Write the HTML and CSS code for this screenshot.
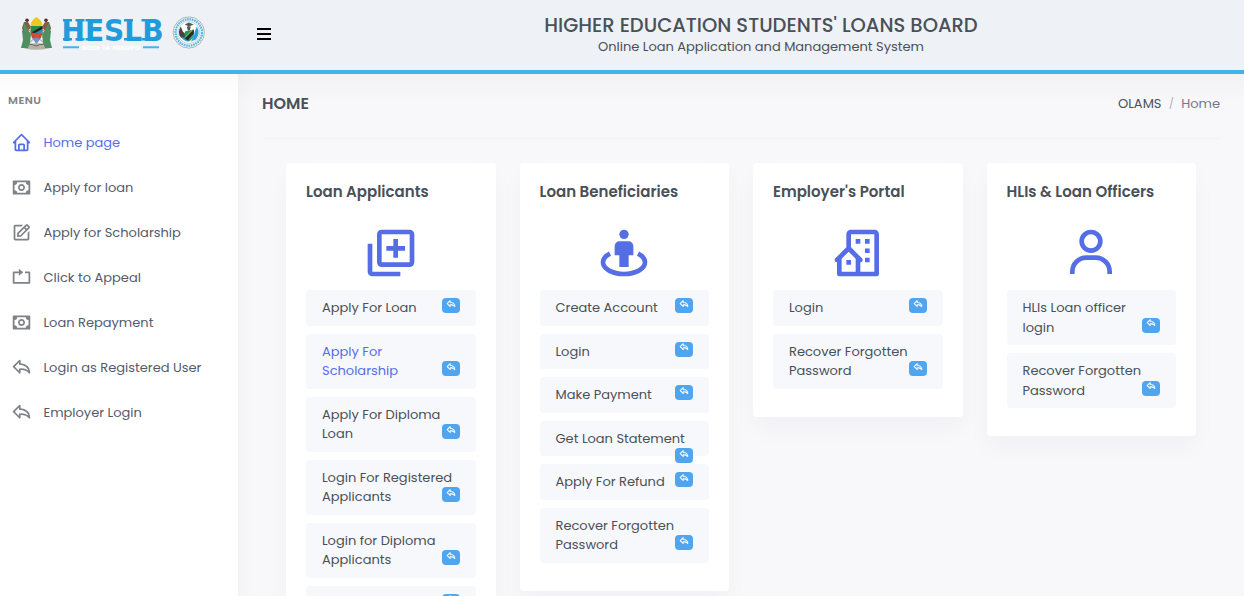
FILE: index.html
```html
<!DOCTYPE html>
<html lang="en">
<head>
<meta charset="utf-8">
<title>HESLB - OLAMS</title>
<link rel="stylesheet" href="styles.css">
</head>
<body>
<svg class="defs" width="0" height="0">
  <symbol id="home" viewBox="0 0 24 24"><path d="M3 13h1v7c0 1.103.897 2 2 2h12c1.103 0 2-.897 2-2v-7h1a1 1 0 0 0 .707-1.707l-9-9a.999.999 0 0 0-1.414 0l-9 9A1 1 0 0 0 3 13zm7 7v-5h4v5h-4zm2-15.586 6 6V15l.001 5H16v-5c0-1.103-.897-2-2-2h-4c-1.103 0-2 .897-2 2v5H6v-9.586l6-6z"/></symbol>
  <symbol id="money" viewBox="0 0 24 24"><path d="M12 8c-2.206 0-4 1.794-4 4s1.794 4 4 4 4-1.794 4-4-1.794-4-4-4zm0 6c-1.103 0-2-.897-2-2s.897-2 2-2 2 .897 2 2-.897 2-2 2z"/><path d="M21 4H3a1 1 0 0 0-1 1v14a1 1 0 0 0 1 1h18a1 1 0 0 0 1-1V5a1 1 0 0 0-1-1zm-1 11a3 3 0 0 0-3 3H7a3 3 0 0 0-3-3V9a3 3 0 0 0 3-3h10a3 3 0 0 0 3 3v6z"/></symbol>
  <symbol id="edit" viewBox="0 0 24 24"><path d="m7 17.013 4.413-.015 9.632-9.54c.378-.378.586-.88.586-1.414s-.208-1.036-.586-1.414l-1.586-1.586c-.756-.756-2.075-.752-2.825-.003L7 12.583v4.43zM18.045 4.458l1.589 1.583-1.597 1.582-1.586-1.585 1.594-1.58zM9 13.417l6.03-5.973 1.586 1.586-6.029 5.971L9 15.006v-1.589z"/><path d="M5 21h14c1.103 0 2-.897 2-2v-8.668l-2 2V19H5V5h6.847l2-2H5c-1.103 0-2 .897-2 2v14c0 1.103.897 2 2 2z"/></symbol>
  <symbol id="appeal" viewBox="0 0 24 24"><path d="M2 6a1 1 0 0 1 1-1h6V2l5 4-5 4V7H4v10h16V7h-4V5h5a1 1 0 0 1 1 1v12a1 1 0 0 1-1 1H3a1 1 0 0 1-1-1z"/></symbol>
  <symbol id="reply" viewBox="0 0 24 24"><path d="M11 7.05V4a1 1 0 0 0-1-1 1 1 0 0 0-.7.29l-7 7a1 1 0 0 0 0 1.42l7 7A1 1 0 0 0 11 18v-3.1h.85a10.89 10.89 0 0 1 8.36 3.72 1 1 0 0 0 1.11.35A1 1 0 0 0 22 18c0-9.12-8.08-10.68-11-10.95zm.85 5.83a14.74 14.74 0 0 0-2 .13A1 1 0 0 0 9 14v1.59L4.42 11 9 6.41V8a1 1 0 0 0 1 1c.91 0 8.11.2 9.67 6.43a13.07 13.07 0 0 0-7.82-2.55z"/></symbol>
</svg>
<header class="topbar">
  <svg class="logo" width="190" height="44" viewBox="0 0 190 44">
    <!-- coat of arms -->
    <g>
      <ellipse cx="16.500" cy="33.500" rx="15" ry="3.200" fill="#b5b3a8"/>
      <path d="M3 34q6-5 13-1 8-4 15 1" fill="none" stroke="#6c655c" stroke-width="1"/>
      <path d="M2 18l6-1 3 4-1 9-2 5H1l2-8zM31 18l-6-1-3 4 1 9 2 5h7l-2-8z" fill="#4f8f62"/>
      <path d="M4 9l4 0 3 5-3 4-5 1-1-4zM29 9l-4 0-3 5 3 4 5 1 1-4z" fill="#8a5a44"/>
      <path d="M4 10l4 6-2 7-3-4zM29 10l-4 6 2 7 3-4z" fill="#4f8f62"/>
      <circle cx="7" cy="7.200" r="1.800" fill="#4d3028"/><circle cx="26" cy="7.200" r="1.800" fill="#4d3028"/>
      <path d="M16.500 4q5.500 3 6 9 0 10-6 18-6-8-6-18 .5-6 6-9z" fill="#ecc922"/>
      <path d="M10.500 13h12v7h-12z" fill="#278c50"/><path d="M10.500 20l12-7v3l-8 4z" fill="#222"/><path d="M16 20l6.500-4v4z" fill="#2989c9"/>
      <path d="M10.500 20h12l-1.500 5h-9z" fill="#d44333"/><path d="M12 25h9l-4.500 6z" fill="#6f93cb"/>
      <path d="M9 30l15-13M24 30L9 17" stroke="#c06a55" stroke-width=".8"/>
    </g>
    <text class="logo-word" x="41.500" y="27.500" textLength="102" lengthAdjust="spacingAndGlyphs">HESLB</text>
    <path d="M43 7.200h9M55.500 7.200h9M43 26.300h9M55.500 26.300h9M65.500 7.200h4M65.500 26.300h4M104 7.200h9M104 26.300h4M121.500 7.200h4M121.500 26.300h4" stroke="#209cda" stroke-width="2.400"/>
    <path d="M43 34.200h16M123 34.200h16" stroke="#4db0e0" stroke-width="2"/>
    <text class="logo-tag" x="62" y="36.500" textLength="58" lengthAdjust="spacingAndGlyphs">BODI YA MIKOPO</text>
    <!-- round seal -->
    <g transform="translate(168.800 19.500)">
      <circle r="15.600" fill="#fff" stroke="#a3a9ad" stroke-width=".9"/>
      <circle r="13.200" fill="none" stroke="#62b9e2" stroke-width="2.400" stroke-dasharray="1.800 .6"/>
      <circle r="11" fill="#fff" stroke="#b9c2c7" stroke-width=".8"/>
      <path d="M-8-6q-4 6 0 11l4 2 1-5-3-3z" fill="#444"/>
      <path d="M8-6q4 7-1 13l-5 2 3-5 1-5z" fill="#2e9fd8"/>
      <path d="M-8 4q3 5 8 5l-3-3z" fill="#2e9fd8"/>
      <path d="M-4-8l4-2 5 2-5 2zM-2-6h4l-1 4h-2z" fill="#555"/>
      <path d="M-4-1l4-1 5-1v8l-5 4-4-3z" fill="#2f8e55"/><path d="M-4 6l9-9v4l-6 7z" fill="#2b2b2b"/><path d="M0 7l5-5v3z" fill="#3aa2d4"/><path d="M-4 5l8-8" stroke="#e2c341" stroke-width=".7"/>
    </g>
  </svg>
  <button class="burger" aria-label="Toggle menu"><i></i><i></i><i></i></button>
  <div class="title">
    <h1>HIGHER EDUCATION STUDENTS' LOANS BOARD</h1>
    <p>Online Loan Application and Management System</p>
  </div>
</header>
<div class="shell">
  <nav class="sidebar">
    <h2>MENU</h2>
    <a class="active"><svg><use href="#home"/></svg><span>Home page</span></a>
    <a><svg><use href="#money"/></svg><span>Apply for loan</span></a>
    <a><svg><use href="#edit"/></svg><span>Apply for Scholarship</span></a>
    <a><svg><use href="#appeal"/></svg><span>Click to Appeal</span></a>
    <a><svg><use href="#money"/></svg><span>Loan Repayment</span></a>
    <a><svg><use href="#reply"/></svg><span>Login as Registered User</span></a>
    <a><svg><use href="#reply"/></svg><span>Employer Login</span></a>
  </nav>
  <main class="content">
    <div class="page-head">
      <h3>HOME</h3>
      <div class="crumbs"><b>OLAMS</b><i>/</i><span>Home</span></div>
    </div>
    <div class="cards">
      <section class="card">
        <h4>Loan Applicants</h4>
        <svg class="hero" viewBox="0 0 24 24"><g fill="none" stroke="currentColor" stroke-width="2"><rect x="7" y="3" width="14" height="14" rx="1"/><path d="M3 8v12a1 1 0 0 0 1 1h12M14 6v8M10 10h8"/></g></svg>
        <a class="item">Apply For Loan<em><svg><use href="#reply"/></svg></em></a>
        <a class="item current">Apply For<br>Scholarship<em><svg><use href="#reply"/></svg></em></a>
        <a class="item">Apply For Diploma<br>Loan<em><svg><use href="#reply"/></svg></em></a>
        <a class="item">Login For Registered<br>Applicants<em><svg><use href="#reply"/></svg></em></a>
        <a class="item">Login for Diploma<br>Applicants<em><svg><use href="#reply"/></svg></em></a>
        <a class="item">&nbsp;<em><svg><use href="#reply"/></svg></em></a>
      </section>
      <section class="card">
        <h4>Loan Beneficiaries</h4>
        <svg class="hero" viewBox="0 0 24 24"><circle cx="12" cy="4" r="2"/><path d="M10 7h4a2 2 0 0 1 2 2v4h-2v5h-4v-5H8V9a2 2 0 0 1 2-2z"/><path d="M6 12.300C4 13.300 3 14.600 3 16c0 2.800 4 5 9 5s9-2.200 9-5c0-1.400-1-2.700-3-3.700" fill="none" stroke="currentColor" stroke-width="2"/></svg>
        <a class="item">Create Account<em><svg><use href="#reply"/></svg></em></a>
        <a class="item">Login<em><svg><use href="#reply"/></svg></em></a>
        <a class="item">Make Payment<em><svg><use href="#reply"/></svg></em></a>
        <a class="item">Get Loan Statement<em><svg><use href="#reply"/></svg></em></a>
        <a class="item">Apply For Refund<em><svg><use href="#reply"/></svg></em></a>
        <a class="item">Recover Forgotten<br>Password<em><svg><use href="#reply"/></svg></em></a>
      </section>
      <section class="card">
        <h4>Employer's Portal</h4>
        <svg class="hero" viewBox="0 0 24 24"><path d="M19 2H9c-1.103 0-2 .897-2 2v5.586l-4.707 4.707A1 1 0 0 0 3 16v5a1 1 0 0 0 1 1h16a1 1 0 0 0 1-1V4c0-1.103-.897-2-2-2zm-8 18H5v-5.586l3-3 3 3V20zm8 0h-6v-4a.999.999 0 0 0 .707-1.707L9 9.586V4h10v16z"/><path d="M11 6h2v2h-2zm4 0h2v2h-2zm0 4.031h2V12h-2zM15 14h2v2h-2zm-8 1h2v2H7z"/></svg>
        <a class="item">Login<em><svg><use href="#reply"/></svg></em></a>
        <a class="item">Recover Forgotten<br>Password<em><svg><use href="#reply"/></svg></em></a>
      </section>
      <section class="card">
        <h4>HLIs &amp; Loan Officers</h4>
        <svg class="hero" viewBox="0 0 24 24"><path d="M12 2a5 5 0 1 0 5 5 5 5 0 0 0-5-5zm0 8a3 3 0 1 1 3-3 3 3 0 0 1-3 3zm9 11v-1a7 7 0 0 0-7-7h-4a7 7 0 0 0-7 7v1h2v-1a5 5 0 0 1 5-5h4a5 5 0 0 1 5 5v1z"/></svg>
        <a class="item">HLIs Loan officer<br>login<em><svg><use href="#reply"/></svg></em></a>
        <a class="item">Recover Forgotten<br>Password<em><svg><use href="#reply"/></svg></em></a>
      </section>
    </div>
  </main>
</div>
</body>
</html>
```
FILE: styles.css
```css
* { box-sizing: border-box; margin: 0; padding: 0; }
body {
  height: 596px;
  overflow: hidden;
  display: flex;
  flex-direction: column;
  background: #f8f8fb;
  color: #495057;
  font: 13px/19.5px Poppins, Inter, sans-serif;
}
svg { fill: currentColor; }
.defs { position: absolute; }

.topbar {
  flex: none;
  height: 74px;
  display: flex;
  background: #eef1f6;
  border-bottom: 4px solid #42b3e5;
}
.logo { margin: 13px 0 0 20px; flex: none; }
.logo-word { font: bold 29.5px "DejaVu Sans", sans-serif; fill: #209cda; }
.logo-tag { font: bold 6px "DejaVu Sans", sans-serif; fill: #fff; }
.burger {
  margin: 28px 0 0 47px;
  width: 14px;
  height: 12px;
  border: 0;
  background: none;
  display: flex;
  flex-direction: column;
  justify-content: space-between;
}
.burger i { height: 2px; background: #000; }
.title { flex: 1; padding: 14px 0 0 7px; text-align: center; }
.title h1 { font-size: 19.5px; line-height: 24px; font-weight: 500; }
.title p { line-height: 18px; }

.shell { flex: 1; display: flex; min-height: 0; }
.sidebar {
  width: 238px;
  flex: none;
  padding-top: 16px;
  background: linear-gradient(#fafafa, #fff 22px);
}
.sidebar h2 { font-size: 11px; line-height: 20px; font-weight: 600; letter-spacing: .5px; padding-left: 8px; margin-bottom: 10px; color: #7f8387; }
.sidebar a { display: flex; align-items: center; height: 45px; padding-left: 11.500px; color: #545a6d; }
.sidebar svg { width: 21px; height: 21px; margin: 0 11.200px 0 -.2px; color: #7f8387; }
.sidebar .active, .sidebar .active svg { color: #556ee6; }

.content {
  flex: 1;
  padding: 0 24px;
  background:
    linear-gradient(90deg, rgba(18, 38, 63, .02), rgba(18, 38, 63, 0) 16px),
    linear-gradient(#f2f2f5, #f8f8fb 30px);
  overflow: hidden;
}
.page-head {
  display: flex;
  justify-content: space-between;
  align-items: center;
  height: 65px;
  padding-bottom: 5px;
  border-bottom: 1px solid #f3f3f6;
}
.page-head h3 { font-size: 16px; font-weight: 600; }
.crumbs { display: flex; }
.crumbs b { font-weight: 400; }
.crumbs i { font-style: normal; font-size: 10px; color: #a6abb8; margin: 0 7.500px; }
.crumbs span { color: #74788d; }

.cards { display: grid; grid-template-columns: repeat(4, 1fr); align-items: start; gap: 24px; padding: 24px 24px 0; }
.card { background: #fff; border-radius: 4px; padding: 20px; box-shadow: 0 12px 24px rgba(18, 38, 63, .03); }
.card h4 { font-size: 15px; line-height: 17px; font-weight: 600; white-space: nowrap; }
.hero { display: block; width: 56px; height: 56px; margin: 24.500px auto 9.500px; color: #556ee6; }
.item { display: block; padding: 8px 16px; margin-bottom: 8px; border-radius: 4px; background: #f6f8fc; white-space: nowrap; }
.current { color: #556ee6; }
.item em { float: right; width: 18px; height: 15px; border-radius: 4px; background: #50a5f1; color: #fff; }
.item em svg { display: block; width: 10px; height: 10px; margin: .5px auto 0; stroke: #fff; stroke-width: .6; }
```
